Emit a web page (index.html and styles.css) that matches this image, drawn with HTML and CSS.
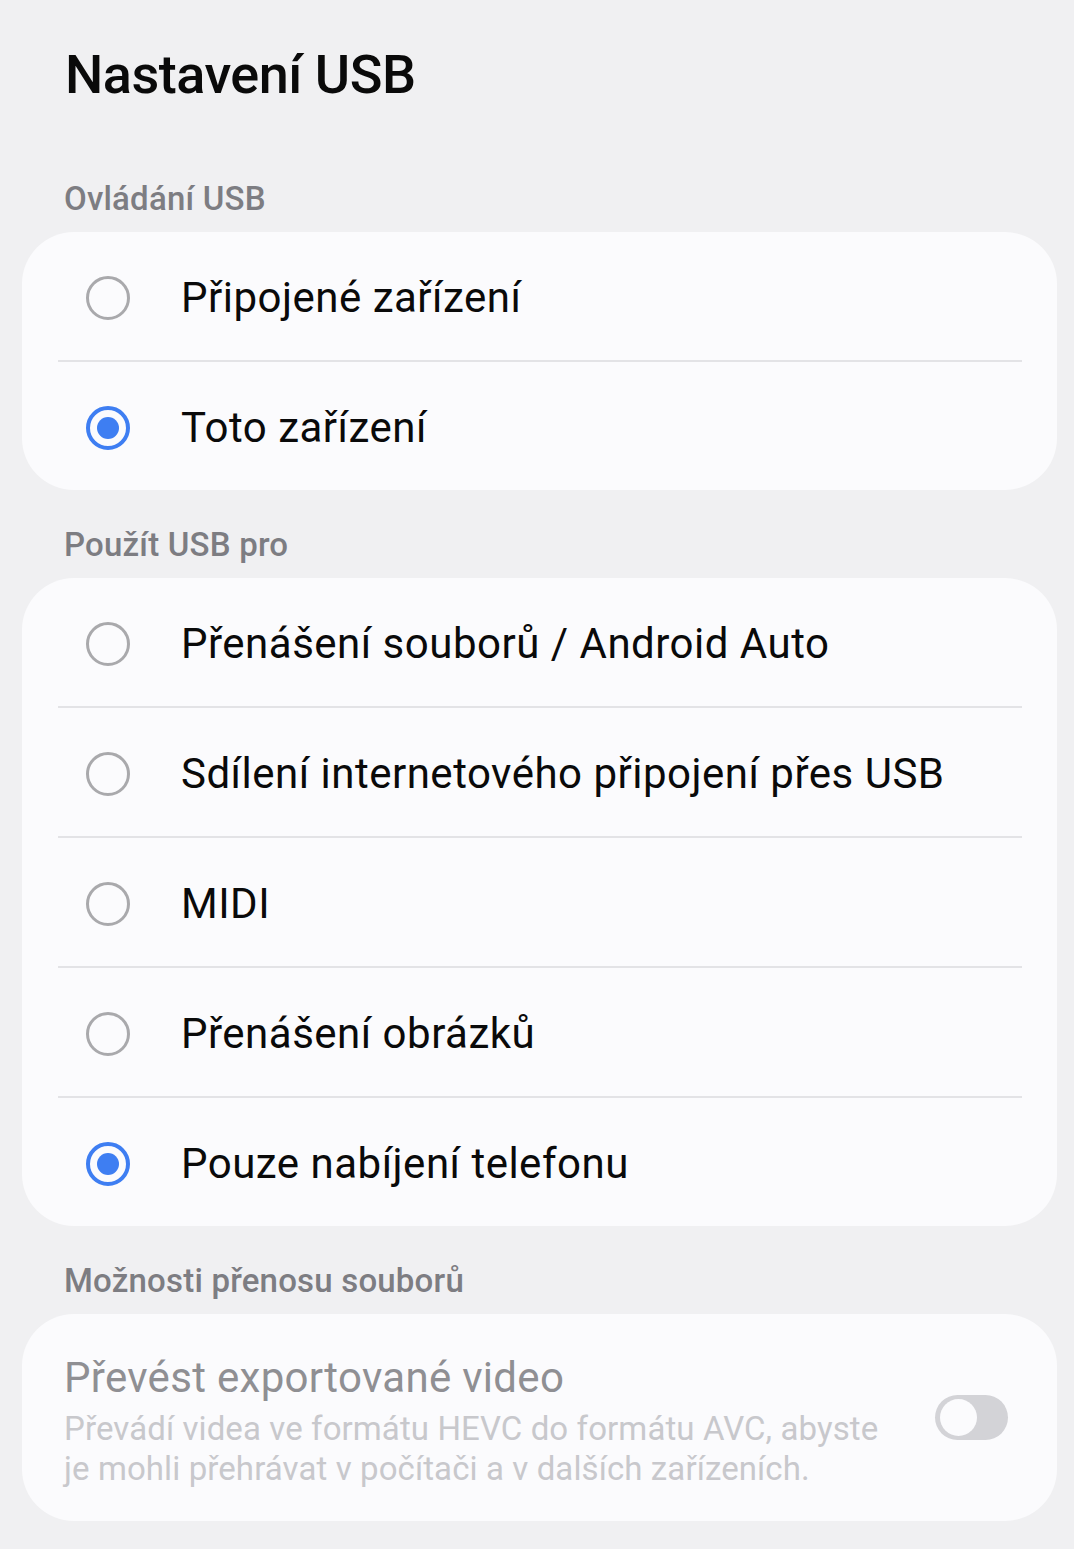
FILE: index.html
```html
<!DOCTYPE html>
<html lang="cs">
<head>
<meta charset="utf-8">
<title>Nastavení USB</title>
<link rel="stylesheet" href="styles.css">
</head>
<body>
<div class="page">
  <header class="title-bar"><h1 class="title">Nastavení USB</h1></header>

  <div class="section-label">Ovládání USB</div>
  <section class="card">
    <div class="row"><span class="radio"></span><span class="label">Připojené zařízení</span></div>
    <div class="divider"></div>
    <div class="row"><span class="radio checked"></span><span class="label">Toto zařízení</span></div>
  </section>

  <div class="section-label">Použít USB pro</div>
  <section class="card">
    <div class="row"><span class="radio"></span><span class="label">Přenášení souborů / Android Auto</span></div>
    <div class="divider"></div>
    <div class="row"><span class="radio"></span><span class="label">Sdílení internetového připojení přes USB</span></div>
    <div class="divider"></div>
    <div class="row"><span class="radio"></span><span class="label">MIDI</span></div>
    <div class="divider"></div>
    <div class="row"><span class="radio"></span><span class="label">Přenášení obrázků</span></div>
    <div class="divider"></div>
    <div class="row"><span class="radio checked"></span><span class="label">Pouze nabíjení telefonu</span></div>
  </section>

  <div class="section-label">Možnosti přenosu souborů</div>
  <section class="card switch-card">
    <div class="switch-text">
      <div class="switch-title">Převést exportované video</div>
      <div class="switch-sub">Převádí videa ve formátu HEVC do formátu AVC, abyste je mohli přehrávat v počítači a v dalších zařízeních.</div>
    </div>
    <span class="toggle"><span class="knob"></span></span>
  </section>
</div>
</body>
</html>
```
FILE: styles.css
```css
html, body {
  margin: 0;
  padding: 0;
  background: #f0f0f2;
}
body {
  font-family: Roboto, "Noto Sans", sans-serif;
  color: #0d0d0d;
}
.page {
  padding: 0 17px 0 22px;
}
.title-bar {
  height: 144px;
  box-sizing: border-box;
  padding: 40px 0 0 43px;
}
.title {
  margin: 0;
  font-size: 54px;
  line-height: 70px;
  font-weight: 500;
  color: #0a0a0a;
  letter-spacing: -0.5px;
}
.section-label {
  height: 87px;
  box-sizing: border-box;
  padding: 35px 0 0 42px;
  font-size: 33px;
  line-height: 40px;
  font-weight: 500;
  color: #7d7d82;
  letter-spacing: 0.2px;
}
.section-label + .card {
  margin-top: 1px;
}
.card {
  background: #fbfbfd;
  border-radius: 52px;
}
.row {
  height: 128px;
  box-sizing: border-box;
  display: flex;
  align-items: center;
  padding: 4px 0 0 64px;
}
.divider {
  height: 2px;
  margin: 0 35px 0 36px;
  background: #e3e3e6;
}
.radio {
  width: 44px;
  height: 44px;
  box-sizing: border-box;
  border: 3px solid #a9a9ac;
  border-radius: 50%;
  flex: none;
  position: relative;
}
.radio.checked {
  border: 4px solid #3e7ef2;
}
.radio.checked::after {
  content: "";
  position: absolute;
  left: 7px;
  top: 7px;
  width: 22px;
  height: 22px;
  border-radius: 50%;
  background: #3e7ef2;
}
.label {
  margin-left: 51px;
  font-size: 42px;
  line-height: 52px;
  letter-spacing: 0.5px;
  color: #0a0a0a;
}
.switch-card {
  height: 207px;
  box-sizing: border-box;
  display: flex;
  align-items: center;
  padding: 0 49px 0 42px;
  margin-bottom: 29px;
}
.switch-text {
  flex: 1;
  padding-top: 6px;
}
.switch-title {
  font-size: 42px;
  line-height: 50px;
  letter-spacing: 0.3px;
  color: #8f8f93;
}
.switch-sub {
  margin-top: 6px;
  font-size: 33px;
  line-height: 40px;
  letter-spacing: 0.1px;
  color: #c8c8cc;
  max-width: 840px;
}
.toggle {
  flex: none;
  width: 73px;
  height: 45px;
  border-radius: 23px;
  background: #d3d3d7;
  margin-left: 30px;
  position: relative;
}
.knob {
  position: absolute;
  left: 5px;
  top: 4px;
  width: 37px;
  height: 37px;
  border-radius: 50%;
  background: #fbfbfd;
}
```
